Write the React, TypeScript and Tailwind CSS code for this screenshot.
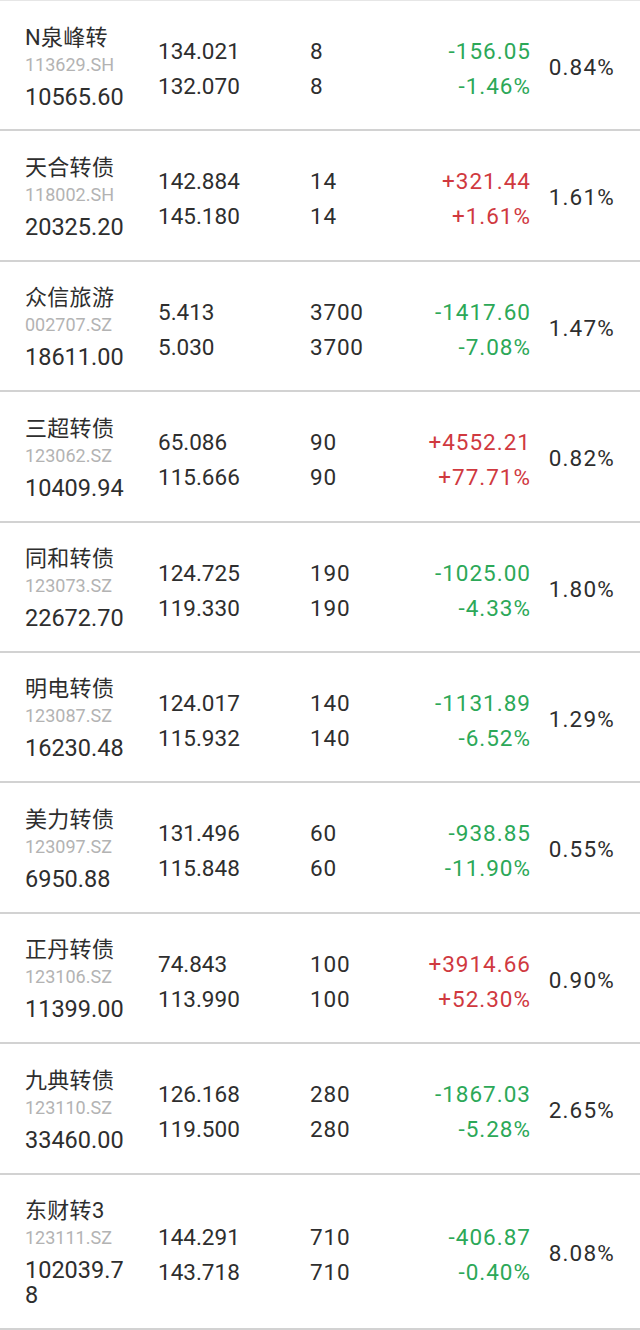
import React from "react";

type Row = {
  name: string;
  code: string;
  value: string;
  p1: string;
  p2: string;
  q1: string;
  q2: string;
  c1: string;
  c2: string;
  pct: string;
};

const rows: Row[] = [
  { name: "N泉峰转", code: "113629.SH", value: "10565.60", p1: "134.021", p2: "132.070", q1: "8", q2: "8", c1: "-156.05", c2: "-1.46%", pct: "0.84%" },
  { name: "天合转债", code: "118002.SH", value: "20325.20", p1: "142.884", p2: "145.180", q1: "14", q2: "14", c1: "+321.44", c2: "+1.61%", pct: "1.61%" },
  { name: "众信旅游", code: "002707.SZ", value: "18611.00", p1: "5.413", p2: "5.030", q1: "3700", q2: "3700", c1: "-1417.60", c2: "-7.08%", pct: "1.47%" },
  { name: "三超转债", code: "123062.SZ", value: "10409.94", p1: "65.086", p2: "115.666", q1: "90", q2: "90", c1: "+4552.21", c2: "+77.71%", pct: "0.82%" },
  { name: "同和转债", code: "123073.SZ", value: "22672.70", p1: "124.725", p2: "119.330", q1: "190", q2: "190", c1: "-1025.00", c2: "-4.33%", pct: "1.80%" },
  { name: "明电转债", code: "123087.SZ", value: "16230.48", p1: "124.017", p2: "115.932", q1: "140", q2: "140", c1: "-1131.89", c2: "-6.52%", pct: "1.29%" },
  { name: "美力转债", code: "123097.SZ", value: "6950.88", p1: "131.496", p2: "115.848", q1: "60", q2: "60", c1: "-938.85", c2: "-11.90%", pct: "0.55%" },
  { name: "正丹转债", code: "123106.SZ", value: "11399.00", p1: "74.843", p2: "113.990", q1: "100", q2: "100", c1: "+3914.66", c2: "+52.30%", pct: "0.90%" },
  { name: "九典转债", code: "123110.SZ", value: "33460.00", p1: "126.168", p2: "119.500", q1: "280", q2: "280", c1: "-1867.03", c2: "-5.28%", pct: "2.65%" },
  { name: "东财转3", code: "123111.SZ", value: "102039.78", p1: "144.291", p2: "143.718", q1: "710", q2: "710", c1: "-406.87", c2: "-0.40%", pct: "8.08%" },
];

export default function App() {
  return (
    <div
      className="w-[640px] bg-white text-[#2e2e2e] border-t border-[#e6e6e6]"
      style={{ fontFamily: 'Roboto, "Noto Sans CJK SC", sans-serif' }}
    >
      {rows.map((r) => {
        const up = r.c1.startsWith("+");
        const color = up ? "text-[#d0393f]" : "text-[#2ca858]";
        return (
          <div
            key={r.code}
            className="flex items-center pl-[25px] pr-[26px] pt-[23.5px] pb-[15.9px] border-b-2 border-[#d2d2d2]"
          >
            <div className="w-[133px] shrink-0 pb-[4px]">
              <div className="w-[106px] break-all">
                <div className="text-[22px] leading-[26px] tracking-[0.3px]">{r.name}</div>
                <div className="text-[18px] leading-[27px] text-[#b3b3b3]">{r.code}</div>
                <div className="mt-[7px] text-[23.5px] leading-[25px]">{r.value}</div>
              </div>
            </div>
            <div className="w-[152px] shrink-0 text-[22.5px] leading-[35px]">
              <div>{r.p1}</div>
              <div>{r.p2}</div>
            </div>
            <div className="w-[100px] shrink-0 text-[22.5px] leading-[35px] tracking-[0.8px]">
              <div>{r.q1}</div>
              <div>{r.q2}</div>
            </div>
            <div className={`w-[121px] -mr-[1px] shrink-0 text-right text-[22.5px] leading-[35px] tracking-[1px] ${color}`}>
              <div>{r.c1}</div>
              <div>{r.c2}</div>
            </div>
            <div className="flex-1 -mr-[1px] text-right text-[22.5px] leading-[35px] tracking-[1.2px] pb-[3px]">{r.pct}</div>
          </div>
        );
      })}
    </div>
  );
}
